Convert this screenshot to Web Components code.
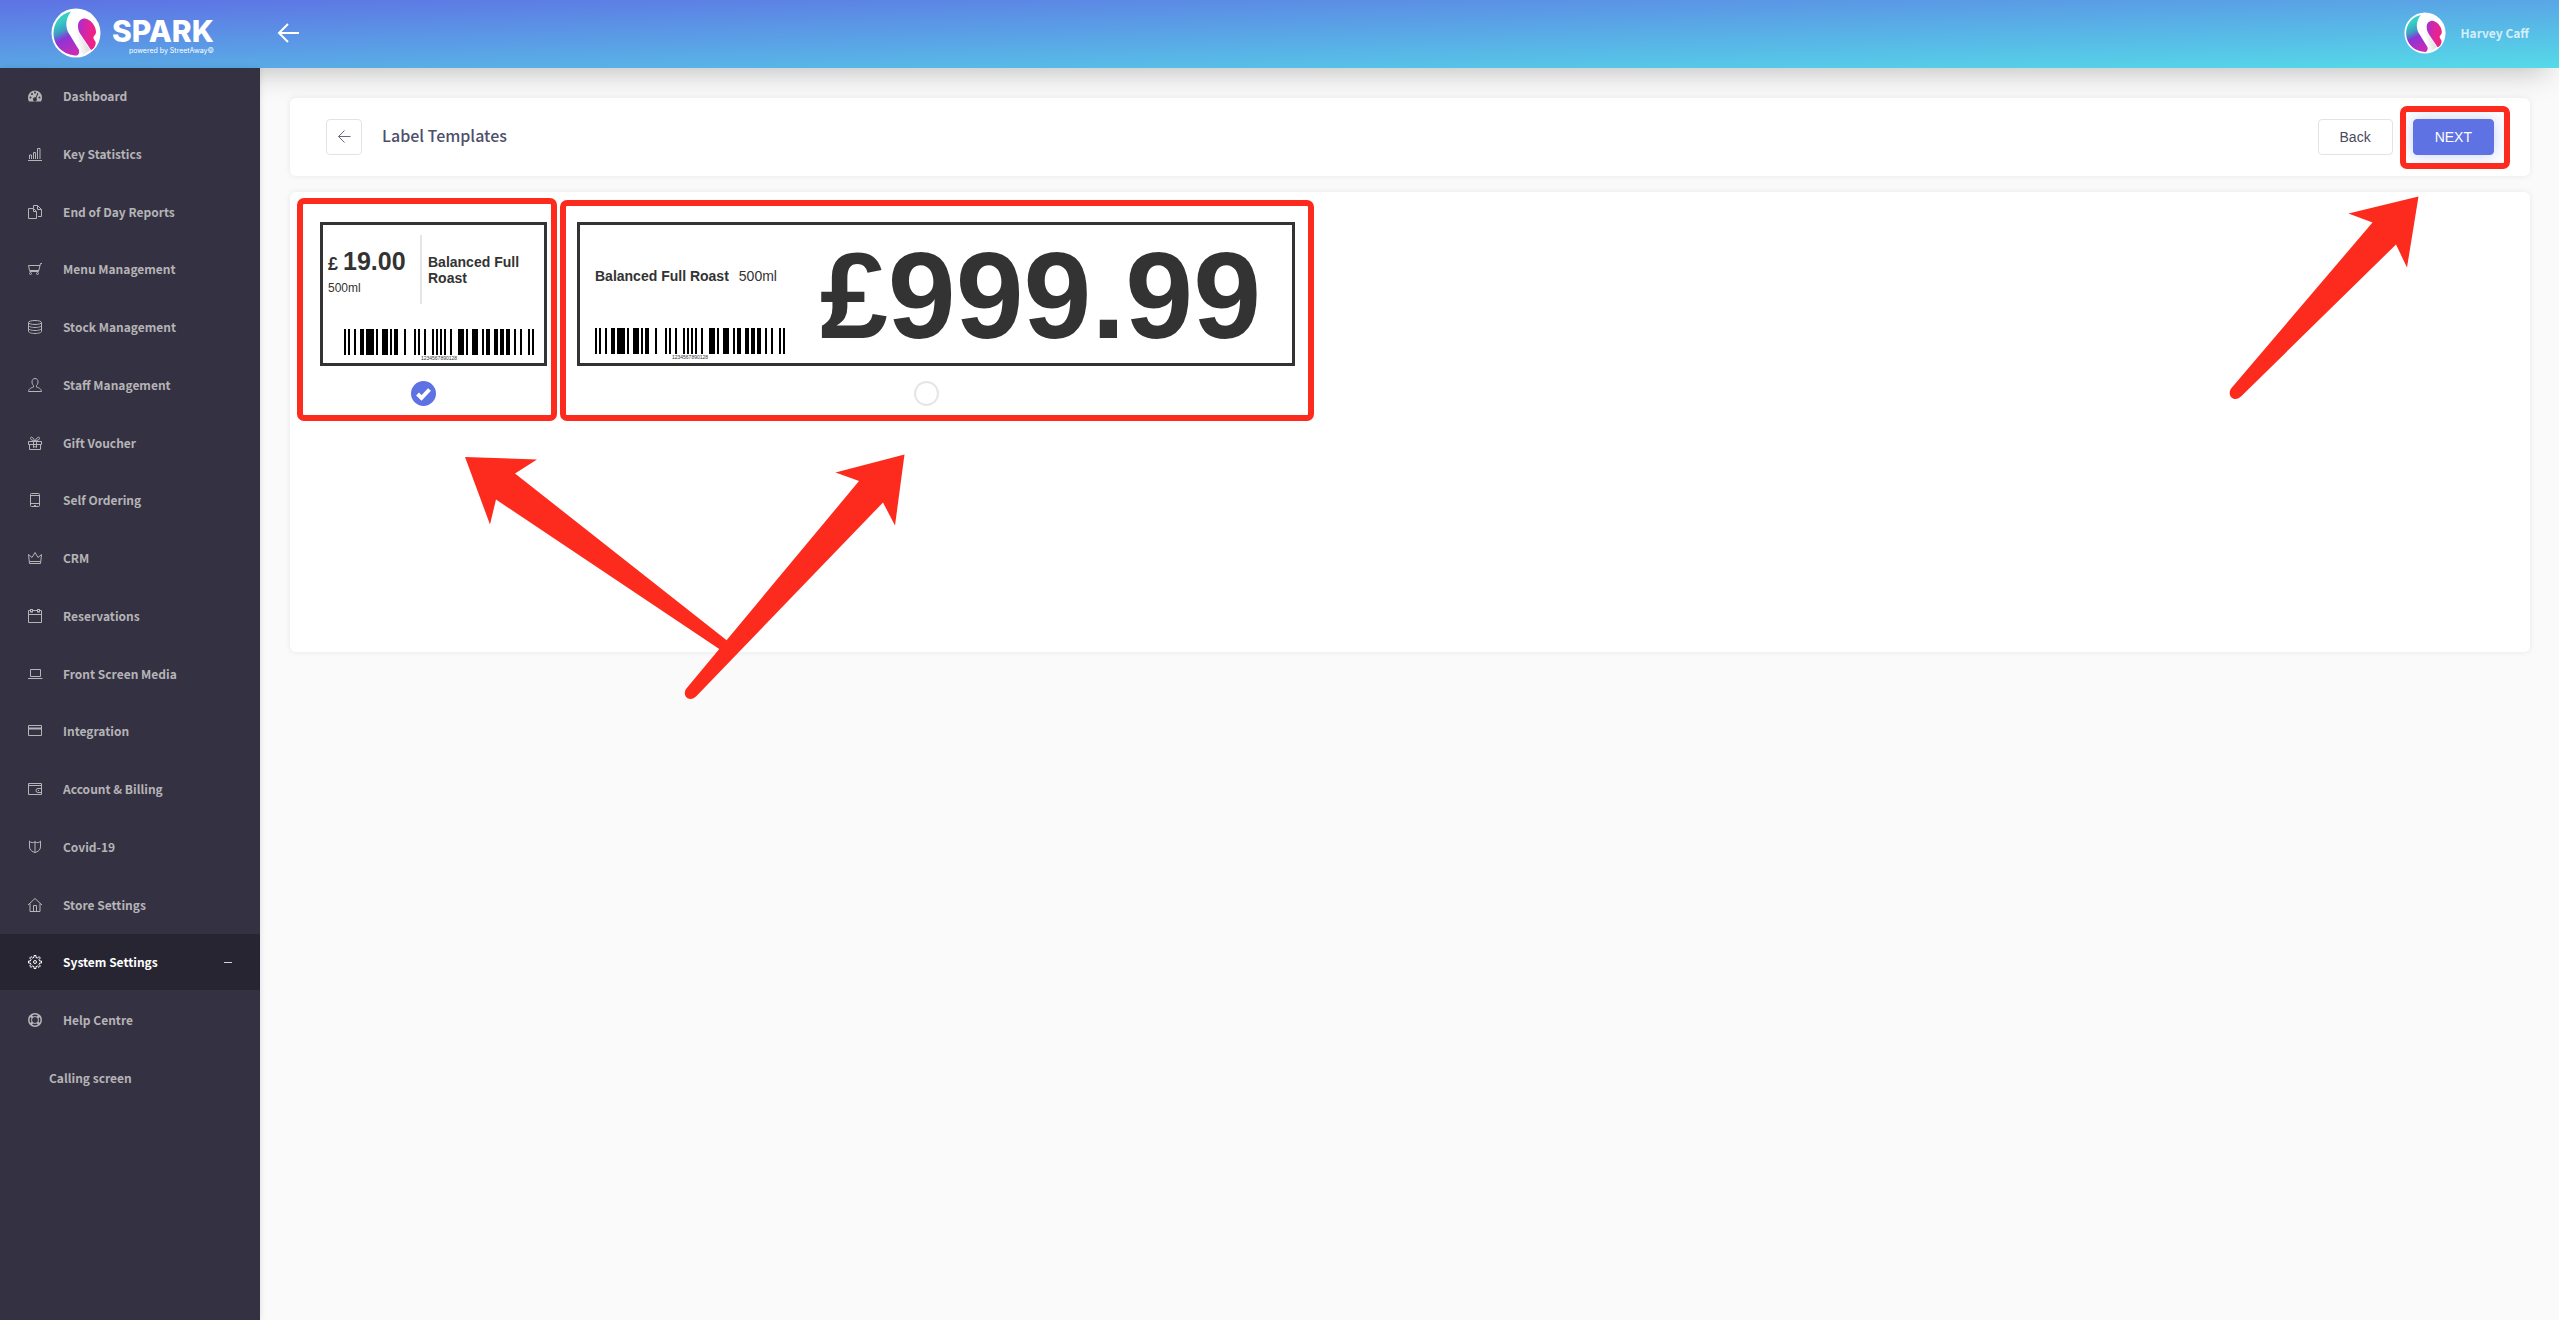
<!DOCTYPE html>
<html lang="en">
<head>
<meta charset="utf-8">
<title>Label Templates</title>
<style>
  body {
    margin: 0;
    min-height: 100vh;
    background: #fafafa;
    color: #333;
    font-family: "Liberation Sans", Arial, sans-serif;
    font-size: 14px;
    --ui-font: "Noto Sans CJK SC", "Noto Sans", sans-serif;
    --primary: #5e72e4;
    --mark: #fd2b1d;
  }
</style>
</head>
<body>
<app-shell>
  <app-header slot="header" user="Harvey Caff"></app-header>
  <side-nav slot="nav"></side-nav>
  <page-toolbar heading="Label Templates"></page-toolbar>
  <template-panel>
    <label-option>
      <shelf-label name="Balanced Full Roast" size="500ml" price="19.00" code="1234567890128"></shelf-label>
      <input slot="control" type="radio" name="template" aria-label="Small label" checked>
    </label-option>
    <label-option>
      <wide-label name="Balanced Full Roast" size="500ml" price="£999.99" code="1234567890128"></wide-label>
      <input slot="control" type="radio" name="template" aria-label="Wide label">
    </label-option>
  </template-panel>
</app-shell>

<script>
const ICONS = {
  dashboard: '<path fill="currentColor" stroke="none" d="M7 1.500a7 7 0 0 0-7 7c0 1.500.4 3 1.100 4h11.800c.7-1 1.100-2.500 1.100-4a7 7 0 0 0-7-7z"/><g fill="#343142" stroke="none"><circle cx="2.500" cy="8.500" r="1"/><circle cx="4" cy="5" r="1"/><circle cx="7" cy="3.600" r="1"/><circle cx="11.500" cy="8.500" r="1"/><path d="M9.200 4l1.200.6-2 4.400a2 2 0 1 1-2.400-.4L8 8z"/></g>',
  stats: '<path d="M0 13.500h14M1.500 12V8h2v4M5.500 12V5.500h2V12M9.500 12V1.500h2.500V12"/>',
  files: '<path d="M.5 3.500h5l3 3v7h-8zM5.500 3.500v3h3M5.500 3V.5h4l4 4v7H10M9.500.5v4h4"/>',
  cart: '<path d="M14 1.500h-1.500L10.500 9.500h-9M.5 3.500h11.500M.5 3.500l1 5h9.500"/><circle cx="2.500" cy="11.500" r="1"/><circle cx="9.500" cy="11.500" r="1"/>',
  stock: '<ellipse cx="7" cy="2.500" rx="6.500" ry="2"/><path d="M.5 2.500v9c0 1 3 2 6.500 2s6.500-1 6.500-2v-9M.5 5.500c0 1 3 2 6.500 2s6.500-1 6.500-2M.5 8.500c0 1 3 2 6.500 2s6.500-1 6.500-2"/>',
  user: '<path d="M5.500 9V7.500C4.500 6.500 4 5.500 4 4c0-2 1-3.500 3-3.500S10 2 10 4c0 1.500-.5 2.500-1.500 3.500V9c2 1 4.500 1 5 4.500H.5C1 10 3.500 10 5.500 9z"/>',
  gift: '<path d="M.5 5.500h13v3H.5zM1.500 8.500v5h11v-5M5.500 5.500v6l1.500-1 1.500 1v-6M7 5C5 1 2.500 0 2.500 2.500 2.500 4 5 4.500 7 5c2-.5 4.500-1 4.500-2.500C11.500 0 9 1 7 5z"/>',
  phone: '<rect x="2.500" y=".5" width="9" height="13" rx="1"/><path d="M2.500 2.500h9M2.500 10.500h9M6 12.500h2"/>',
  crown: '<path d="M1.500 12.500L.5 3.500l3.500 3 3-5 3 5 3.500-3-1 9zM1.500 10.500h11"/>',
  calendar: '<path d="M.5 1.500h13v12H.5zM.5 5.500h13"/><rect x="2.500" y=".5" width="2" height="2.500" fill="#343142"/><rect x="9.500" y=".5" width="2" height="2.500" fill="#343142"/>',
  laptop: '<path d="M2.500 2.500h10v7h-10zM0 11.500h14.500"/>',
  card: '<path d="M.5 1.500h13v10H.5z"/><path stroke-width="2" d="M.5 4.500h13"/>',
  wallet: '<path d="M.5 1.500h13v11H.5zM.5 3.500h13M14 6.500H10a1.500 1.500 0 0 0 0 4h4M10 8.500h1"/>',
  shield: '<path d="M7 1v11.500M1.500 1v6c0 3 3 5 5.500 5.500 2.500-.5 5.500-2.500 5.500-5.500V1C11 3 9 3 7 2 5 3 3 3 1.500 1z"/>',
  home: '<path d="M0 7l7-6.500L14 7M2 5.500v8h10v-8M5.500 13.500v-6h3v6"/>',
  cog: '<circle cx="7" cy="7" r="1.500"/><path d="M6 .5h2v2l1.500.6L11 1.600 12.400 3 11 4.500l.6 1.500h1.900v2h-1.900L11 9.500l1.400 1.500-1.400 1.400L9.500 11l-1.500.6v1.900H6v-1.900L4.500 11 3 12.400 1.600 11 3 9.500 2.400 8H.5V6h1.900L3 4.500 1.600 3 3 1.600 4.500 3 6 2.400z"/>',
  help: '<circle cx="7" cy="7" r="6.200" stroke-width="1.500"/><circle cx="7" cy="7" r="3.500"/><path stroke-width="2.500" d="M2.600 2.600l2 2M11.400 2.600l-2 2M2.600 11.400l2-2M11.400 11.400l-2-2"/>',
};

const NAV_ITEMS = [
  ['Dashboard', 'dashboard'],
  ['Key Statistics', 'stats'],
  ['End of Day Reports', 'files'],
  ['Menu Management', 'cart'],
  ['Stock Management', 'stock'],
  ['Staff Management', 'user'],
  ['Gift Voucher', 'gift'],
  ['Self Ordering', 'phone'],
  ['CRM', 'crown'],
  ['Reservations', 'calendar'],
  ['Front Screen Media', 'laptop'],
  ['Integration', 'card'],
  ['Account & Billing', 'wallet'],
  ['Covid-19', 'shield'],
  ['Store Settings', 'home'],
  ['System Settings', 'cog', true],
  ['Help Centre', 'help'],
  ['Calling screen', null],
];

class AppShell extends HTMLElement {
  constructor() {
    super();
    this.attachShadow({ mode: 'open' }).innerHTML = `
    <style>
      :host {
        display: grid;
        grid-template: 68px 1fr / 260px minmax(0, 1fr);
        min-height: 100vh;
      }
      slot[name="header"]::slotted(*) {
        grid-column: 1 / 3;
        z-index: 1;
      }
      slot[name="nav"]::slotted(*) {
        z-index: 2;
      }
      main {
        display: flex;
        flex-direction: column;
        gap: 16px;
        padding: 30px 29px 30px 30px;
      }
    </style>
    <slot name="header"></slot>
    <slot name="nav"></slot>
    <main><slot></slot></main>
    `;
  }
}
customElements.define('app-shell', AppShell);

class BrandMark extends HTMLElement {
  constructor() {
    super();
    this.attachShadow({ mode: 'open' }).innerHTML = `
    <style>
      :host { display: block; width: 50px; height: 50px; }
      svg { display: block; width: 100%; height: 100%; }
    </style>
    <svg viewBox="0 0 50 50" aria-hidden="true">
      <defs>
        <linearGradient id="left" x1=".45" y1="0" x2=".75" y2="1">
          <stop offset=".15" stop-color="#35cfc4"/>
          <stop offset=".38" stop-color="#3f9cc6"/>
          <stop offset=".55" stop-color="#8b35d6"/>
          <stop offset="1" stop-color="#cc2bb4"/>
        </linearGradient>
        <linearGradient id="right" x1="0" y1="0" x2="1" y2=".3">
          <stop offset="0" stop-color="#a12fd6"/>
          <stop offset=".6" stop-color="#e0249b"/>
          <stop offset="1" stop-color="#ee2382"/>
        </linearGradient>
        <linearGradient id="band" x1="0" y1=".6" x2="1" y2=".3">
          <stop offset=".3" stop-color="#fff"/>
          <stop offset="1" stop-color="#cfcfd6"/>
        </linearGradient>
      </defs>
      <circle cx="25" cy="25" r="24.500" fill="#fff"/>
      <path fill="url(#left)" d="M20 3.500C9 6 2.500 15 2.500 25.500 2.500 38 13 47.500 26 47.500c2-1 2.500-3 2-5.500L17 24c-3-7-2-14 3-20.500z"/>
      <path fill="url(#band)" d="M27 13c-3 5-1 9 2 14l10 15-7 5-12-21c-2-6 2-11 7-13z"/>
      <path fill="url(#right)" d="M27 18c0-5 3-7.500 7-7.500 5 .5 11 7 11 13.500 0 3-3 4-2.500 6 .5 3 3 3 2 6.500-.5 2-2 4.500-4.500 5.500L30 27c-2-3-3-5-3-9z"/>
    </svg>
    `;
  }
}
customElements.define('brand-mark', BrandMark);

class AppHeader extends HTMLElement {
  constructor() {
    super();
    this.root = this.attachShadow({ mode: 'open' });
    this.root.innerHTML = `
    <style>
      :host {
        display: flex;
        align-items: center;
        box-sizing: border-box;
        padding: 0 30px 2px 51px;
        background: linear-gradient(to bottom right, #5e72e4, #55dae8);
        box-shadow: 0 15px 30px -12px rgba(0, 0, 0, 0.25);
        color: #fff;
      }
      .brand {
        display: flex;
        align-items: center;
        gap: 11px;
        width: 226px;
        color: inherit;
        text-decoration: none;
      }
      .words {
        display: flex;
        flex-direction: column;
        align-items: flex-end;
        padding-top: 4px;
        font-family: Inter, sans-serif;
      }
      strong {
        font-size: 30px;
        line-height: 32px;
        font-weight: 800;
      }
      small {
        font-size: 7px;
        line-height: 8px;
      }
      button {
        display: flex;
        padding: 0;
        border: 0;
        background: none;
        color: inherit;
        cursor: pointer;
      }
      .user {
        display: flex;
        align-items: center;
        gap: 14px;
        margin-left: auto;
        color: rgba(255, 255, 255, 0.75);
        font: 700 12px/20px var(--ui-font);
      }
      .user brand-mark {
        width: 42px;
        height: 42px;
      }
    </style>
    <a class="brand" href="#">
      <brand-mark></brand-mark>
      <span class="words">
        <strong>SPARK</strong>
        <small>powered by StreetAway©</small>
      </span>
    </a>
    <button type="button" aria-label="Toggle menu">
      <svg width="22" height="20" fill="none" stroke="currentColor" stroke-width="2"><path d="M22 10H2M11 1L2 10l9 9"/></svg>
    </button>
    <div class="user">
      <brand-mark></brand-mark>
      <span id="name"></span>
    </div>
    `;
  }

  connectedCallback() {
    this.root.getElementById('name').textContent = this.getAttribute('user');
  }
}
customElements.define('app-header', AppHeader);

class SideNav extends HTMLElement {
  constructor() {
    super();
    this.root = this.attachShadow({ mode: 'open' });
    this.root.innerHTML = `
    <style>
      :host {
        display: block;
        background: #343142;
        box-shadow: 0 0 6px rgba(0, 0, 0, 0.12);
      }
      a {
        display: flex;
        align-items: center;
        gap: 21px;
        box-sizing: border-box;
        height: 56px;
        margin-bottom: 2px;
        padding: 0 28px;
        color: #b5b4b6;
        font: 700 12px/20px var(--ui-font);
        text-decoration: none;
      }
      a:nth-child(4n+3) {
        margin-bottom: 1px;
      }
      a.active {
        background: #272532;
        color: #fff;
      }
      a.plain {
        padding-left: 49px;
      }
      svg {
        width: 15px;
        height: 14px;
        margin-right: -1px;
        fill: none;
        stroke: currentColor;
        overflow: visible;
      }
      a.active::after {
        content: "";
        width: 8px;
        height: 1px;
        margin-left: auto;
        background: #d5d5d8;
      }
    </style>
    <nav></nav>
    `;
  }

  connectedCallback() {
    const nav = this.root.querySelector('nav');
    NAV_ITEMS.forEach(([text, icon, active]) => {
      const a = document.createElement('a');
      a.href = '#';
      if (icon) {
        a.innerHTML = `<svg viewBox="0 0 15 14" aria-hidden="true">${ICONS[icon]}</svg>`;
      } else {
        a.classList.add('plain');
      }
      if (active) {
        a.classList.add('active');
      }
      const span = document.createElement('span');
      span.textContent = text;
      a.appendChild(span);
      nav.appendChild(a);
    });
  }
}
customElements.define('side-nav', SideNav);

class PageToolbar extends HTMLElement {
  constructor() {
    super();
    this.root = this.attachShadow({ mode: 'open' });
    this.root.innerHTML = `
    <style>
      :host {
        display: flex;
        align-items: center;
        gap: 20px;
        padding: 21px 36px;
        border-radius: 6px;
        background: #fff;
        box-shadow: 0 0 6px rgba(0, 0, 0, 0.08);
      }
      h1 {
        margin: 0 auto 4px 0;
        color: #4d4f6b;
        font: 500 16px/24px var(--ui-font);
      }
      button {
        box-sizing: border-box;
        height: 36px;
        padding: 0 21px;
        border: 1px solid #e3e3e6;
        border-radius: 4px;
        background: #fff;
        color: #4a4a5e;
        font: 14px/20px "Liberation Sans", Arial, sans-serif;
        cursor: pointer;
      }
      .icon {
        display: grid;
        place-content: center;
        width: 36px;
        padding: 0;
      }
      .primary {
        border-color: var(--primary);
        background: var(--primary);
        color: #fff;
        box-shadow: 0 0 16px rgba(94, 114, 228, 0.35);
      }
      .marked {
        display: flex;
        position: relative;
      }
      .marked::after {
        content: "";
        position: absolute;
        inset: -13px -16px -14px -13px;
        border: 6px solid var(--mark);
        border-radius: 7px;
        pointer-events: none;
      }
    </style>
    <button class="icon" type="button" aria-label="Go back">
      <svg width="14" height="14" fill="none" stroke="#6b6880"><path d="M13.500 6.500H1.500M7.500.5l-6 6 6 6"/></svg>
    </button>
    <h1></h1>
    <button type="button">Back</button>
    <span class="marked"><button class="primary" type="button">NEXT</button></span>
    `;
  }

  connectedCallback() {
    this.root.querySelector('h1').textContent = this.getAttribute('heading');
  }
}
customElements.define('page-toolbar', PageToolbar);

class TemplatePanel extends HTMLElement {
  constructor() {
    super();
    this.attachShadow({ mode: 'open' }).innerHTML = `
    <style>
      :host {
        display: flex;
        align-items: flex-start;
        gap: 10px;
        position: relative;
        box-sizing: border-box;
        min-height: 460px;
        padding: 30px 10px;
        border-radius: 6px;
        background: #fff;
        box-shadow: 0 0 6px rgba(0, 0, 0, 0.08);
      }
      svg {
        position: absolute;
        fill: var(--mark);
        pointer-events: none;
      }
      .choices {
        left: 170px;
        top: 260px;
      }
      .next {
        right: 105px;
        top: 0;
      }
    </style>
    <slot></slot>
    <svg class="choices" width="450" height="250" aria-hidden="true">
      <path d="M5 5l72 2.500L55 21.500l212 167-7 9L36 47.500l-6 25z"/>
      <path d="M444.500 2.500l-69 18 23.500 8.500L226 237c-3 5 0 10 4.500 10 2 0 4-1 6-3L423 50.500l12 23z"/>
    </svg>
    <svg class="next" width="200" height="215" aria-hidden="true">
      <path d="M193.500 4.500l-70 17 24 9L6.500 196c-4 5-1 11 4 11 2 0 4-1 6-3L171 52.500l11 23z"/>
    </svg>
    `;
  }
}
customElements.define('template-panel', TemplatePanel);

class LabelOption extends HTMLElement {
  constructor() {
    super();
    this.attachShadow({ mode: 'open' }).innerHTML = `
    <style>
      :host {
        display: flex;
        flex-direction: column;
        align-items: center;
        gap: 15px;
        position: relative;
        padding-bottom: 6px;
      }
      :host::after {
        content: "";
        position: absolute;
        inset: -24px -10px -9px -3px;
        border: 6px solid var(--mark);
        border-radius: 7px;
        pointer-events: none;
      }
      :host(:last-of-type)::after {
        inset: -22px -19px -9px 3px;
      }
      .label {
        padding-left: 20px;
      }
      ::slotted(input) {
        appearance: none;
        width: 25px;
        height: 25px;
        margin: 0;
        border: 2px solid #e5e5e5;
        border-radius: 50%;
        background: #fff;
      }
      ::slotted(input:checked) {
        border-color: var(--primary);
        background: var(--primary) url('data:image/svg+xml,<svg xmlns="http://www.w3.org/2000/svg" viewBox="0 0 21 21"><path fill="none" stroke="white" stroke-width="4" d="M4.500 11l4 4 8-8.500"/></svg>');
      }
    </style>
    <div class="label"><slot></slot></div>
    <slot name="control"></slot>
    `;
  }
}
customElements.define('label-option', LabelOption);

const L_CODES = ['0001101', '0011001', '0010011', '0111101', '0100011', '0110001', '0101111', '0111011', '0110111', '0001011'];
const PARITY = ['LLLLLL', 'LLGLGG', 'LLGGLG', 'LLGGGL', 'LGLLGG', 'LGGLLG', 'LGGGLL', 'LGLGLG', 'LGLGGL', 'LGGLGL'];

class BarCode extends HTMLElement {
  constructor() {
    super();
    this.root = this.attachShadow({ mode: 'open' });
    this.root.innerHTML = `
    <style>
      :host {
        display: flex;
        flex-direction: column;
        align-items: center;
        width: 190px;
      }
      svg { display: block; }
      span {
        font-size: 5px;
        line-height: 6px;
      }
    </style>
    <svg width="190" height="26" shape-rendering="crispEdges" aria-hidden="true"></svg>
    <span></span>
    `;
  }

  connectedCallback() {
    const code = this.getAttribute('value');
    this.root.querySelector('span').textContent = code;
    const rects = [...this._encode(code)].map((bit, i) => {
      return bit === '1' ? `<rect x="${i * 2}" width="2" height="26"/>` : '';
    });
    this.root.querySelector('svg').innerHTML = rects.join('');
  }

  // EAN-13: 95 modules, the first digit only picks the parity of the left half
  _encode(code) {
    const digits = [...code].map(Number);
    const flip = (s) => s.replace(/./g, (b) => (b === '1' ? '0' : '1'));
    let bits = '101';
    for (let i = 1; i <= 6; i++) {
      const l = L_CODES[digits[i]];
      const even = PARITY[digits[0]][i - 1] === 'G';
      bits += even ? [...flip(l)].reverse().join('') : l;
    }
    bits += '01010';
    for (let i = 7; i <= 12; i++) {
      bits += flip(L_CODES[digits[i]]);
    }
    return bits + '101';
  }
}
customElements.define('bar-code', BarCode);

class ShelfLabel extends HTMLElement {
  constructor() {
    super();
    this.root = this.attachShadow({ mode: 'open' });
  }

  connectedCallback() {
    this.root.innerHTML = `
    <style>
      :host {
        display: flex;
        flex-direction: column;
        justify-content: space-between;
        box-sizing: border-box;
        width: 227px;
        height: 144px;
        padding: 10px 10px 2px 5px;
        border: 3px solid #333;
      }
      .top {
        display: grid;
        grid-template-columns: 94px 1fr;
        height: 69px;
      }
      .cost {
        display: flex;
        flex-direction: column;
        justify-content: center;
        gap: 2px;
        padding-top: 4px;
        border-right: 2px solid #e5e5e5;
        font-size: 12px;
        line-height: 16px;
      }
      .price {
        font-size: 25px;
        line-height: 28px;
        font-weight: 700;
        white-space: nowrap;
      }
      .price small { font-size: 18px; }
      .name {
        align-self: center;
        padding-left: 6px;
        font-size: 14px;
        line-height: 16px;
        font-weight: 700;
      }
      bar-code { align-self: flex-end; }
    </style>
    <div class="top">
      <div class="cost">
        <span class="price"><small>£ </small>${this.getAttribute('price')}</span>
        <span>${this.getAttribute('size')}</span>
      </div>
      <span class="name">${this.getAttribute('name')}</span>
    </div>
    <bar-code value="${this.getAttribute('code')}"></bar-code>
    `;
  }
}
customElements.define('shelf-label', ShelfLabel);

class WideLabel extends HTMLElement {
  constructor() {
    super();
    this.root = this.attachShadow({ mode: 'open' });
  }

  connectedCallback() {
    this.root.innerHTML = `
    <style>
      :host {
        display: flex;
        justify-content: space-between;
        box-sizing: border-box;
        width: 718px;
        height: 144px;
        padding: 0 31px 3px 15px;
        border: 3px solid #333;
      }
      .info {
        display: flex;
        flex-direction: column;
        justify-content: space-between;
        padding-top: 43px;
      }
      .name {
        display: flex;
        gap: 10px;
        line-height: 16px;
      }
      .price {
        align-self: flex-end;
        font-size: 122px;
        line-height: 128px;
        font-weight: 700;
      }
    </style>
    <div class="info">
      <div class="name"><b>${this.getAttribute('name')}</b><span>${this.getAttribute('size')}</span></div>
      <bar-code value="${this.getAttribute('code')}"></bar-code>
    </div>
    <span class="price">${this.getAttribute('price')}</span>
    `;
  }
}
customElements.define('wide-label', WideLabel);
</script>
</body>
</html>
